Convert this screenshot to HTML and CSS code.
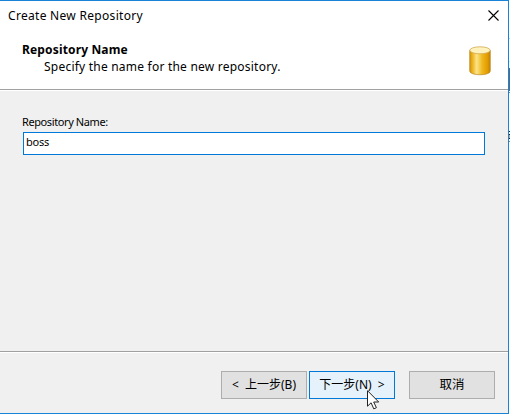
FILE: index.html
```html
<!DOCTYPE html>
<html lang="zh-CN">
<head>
<meta charset="utf-8">
<title>Create New Repository</title>
<link rel="stylesheet" href="styles.css">
</head>
<body>
<div class="dialog">
  <header class="titlebar">
    <span class="title">Create New Repository</span>
    <svg class="close" width="11" height="11" viewBox="0 0 11 11"><path d="M.5.5l10 10M10.5.5l-10 10" stroke="#000" stroke-width="1.1" fill="none"/></svg>
  </header>
  <section class="banner">
    <div class="heading">
      <h1>Repository Name</h1>
      <p>Specify the name for the new repository.</p>
    </div>
    <svg class="database" width="22" height="30" viewBox="0 0 22 30">
      <defs><linearGradient id="gold"><stop offset="0" stop-color="#d39408"/><stop offset=".12" stop-color="#edb01a"/><stop offset=".34" stop-color="#fbe488"/><stop offset=".6" stop-color="#efb91f"/><stop offset=".85" stop-color="#e39e00"/><stop offset="1" stop-color="#c08208"/></linearGradient></defs>
      <path d="M.7 4.500v20.500c0 5 20.600 5 20.600 0V4.500z" fill="url(#gold)" stroke="#bd8823" stroke-width=".7"/>
      <ellipse cx="11" cy="4.300" rx="10.200" ry="3.500" fill="#fff2bd" stroke="#d3aa52" stroke-width=".8"/>
    </svg>
  </section>
  <main class="content">
    <label for="name">Repository Name:</label>
    <input id="name" type="text" value="boss">
  </main>
  <footer class="actions">
    <button class="back">&lt; 上一步(B)</button>
    <button class="next">下一步(N) &gt;</button>
    <button class="cancel">取消</button>
  </footer>
</div>
<div class="desktop"></div>
<svg class="cursor" width="13" height="20" viewBox="0 0 13 20"><path d="M.5.7v15.500l3.600-3.400 2.700 6.100 2.600-1.200-2.700-5.700h5z" fill="#fff" stroke="#222" stroke-width="1"/></svg>
</body>
</html>
```
FILE: styles.css
```css
* { box-sizing: border-box; }
body { margin: 0; width: 510px; height: 414px; overflow: hidden; display: flex; font: 12px/16px "Noto Sans", "Noto Sans CJK SC", sans-serif; color: #000; }
.dialog { width: 509px; height: 414px; display: flex; flex-direction: column; background: #f0f0f0; border: solid #1883d7; border-width: 1px 1px 1px 0; }
.titlebar { height: 30px; background: #fff; display: flex; justify-content: space-between; padding: 7px 9px 0 8px; }
.title { letter-spacing: .3px; }
.close { margin-top: 2px; }
.banner { height: 58px; background: #fff; display: flex; justify-content: space-between; padding: 10px 17px 0 22px; box-shadow: 0 1px #a0a0a0, 0 2px #fff; }
h1 { margin: 0; font-size: 12px; line-height: 17px; letter-spacing: .15px; }
p { margin: 0 0 0 22px; line-height: 17px; letter-spacing: .22px; }
.database { margin-top: 5px; }
.content { height: 262px; padding: 26px 23px 0; }
label { display: block; height: 17px; margin-left: -1px; font: 11px/14px "Noto Sans", sans-serif; letter-spacing: -.4px; }
input { display: block; width: 462px; height: 23px; border: 1px solid #0078d7; outline: 0; padding: 0 2px 4px; font: 11px "Noto Sans", sans-serif; letter-spacing: -.2px; background: #fff; }
.actions { flex: 1; border-top: 1px solid #a0a0a0; box-shadow: inset 0 1px #fff; padding: 19px 13px 0; display: flex; justify-content: flex-end; }
button { width: 86px; height: 28px; padding: 0; border: 1px solid #adadad; background: #e1e1e1; font: 12px/16px "Noto Sans", "Noto Sans CJK SC", sans-serif; word-spacing: 3px; color: #000; white-space: nowrap; }
.next { margin: 0 14px 0 2px; border-color: #0078d7; background: #e5f1fb; }
.cancel { font-size: 12.5px; }
.desktop { width: 1px; height: 414px; background: linear-gradient(#fff 38px, #b8d4ea 38px 39px, #fff 39px 61px, #d5e5f2 61px 62px, #f3f6f9 62px 68px, #596a7c 68px 91px, #fff 91px 92px, #6f8fac 92px 93px, #fff 93px 131px, #222 131px 132px, #fff 132px 134px, #222 134px 135px, #c8a373 135px 138px, #222 138px 139px, #fff 139px 141px, #a08060 141px 142px, #fff 142px); }
.cursor { position: absolute; left: 367px; top: 390px; }
```
